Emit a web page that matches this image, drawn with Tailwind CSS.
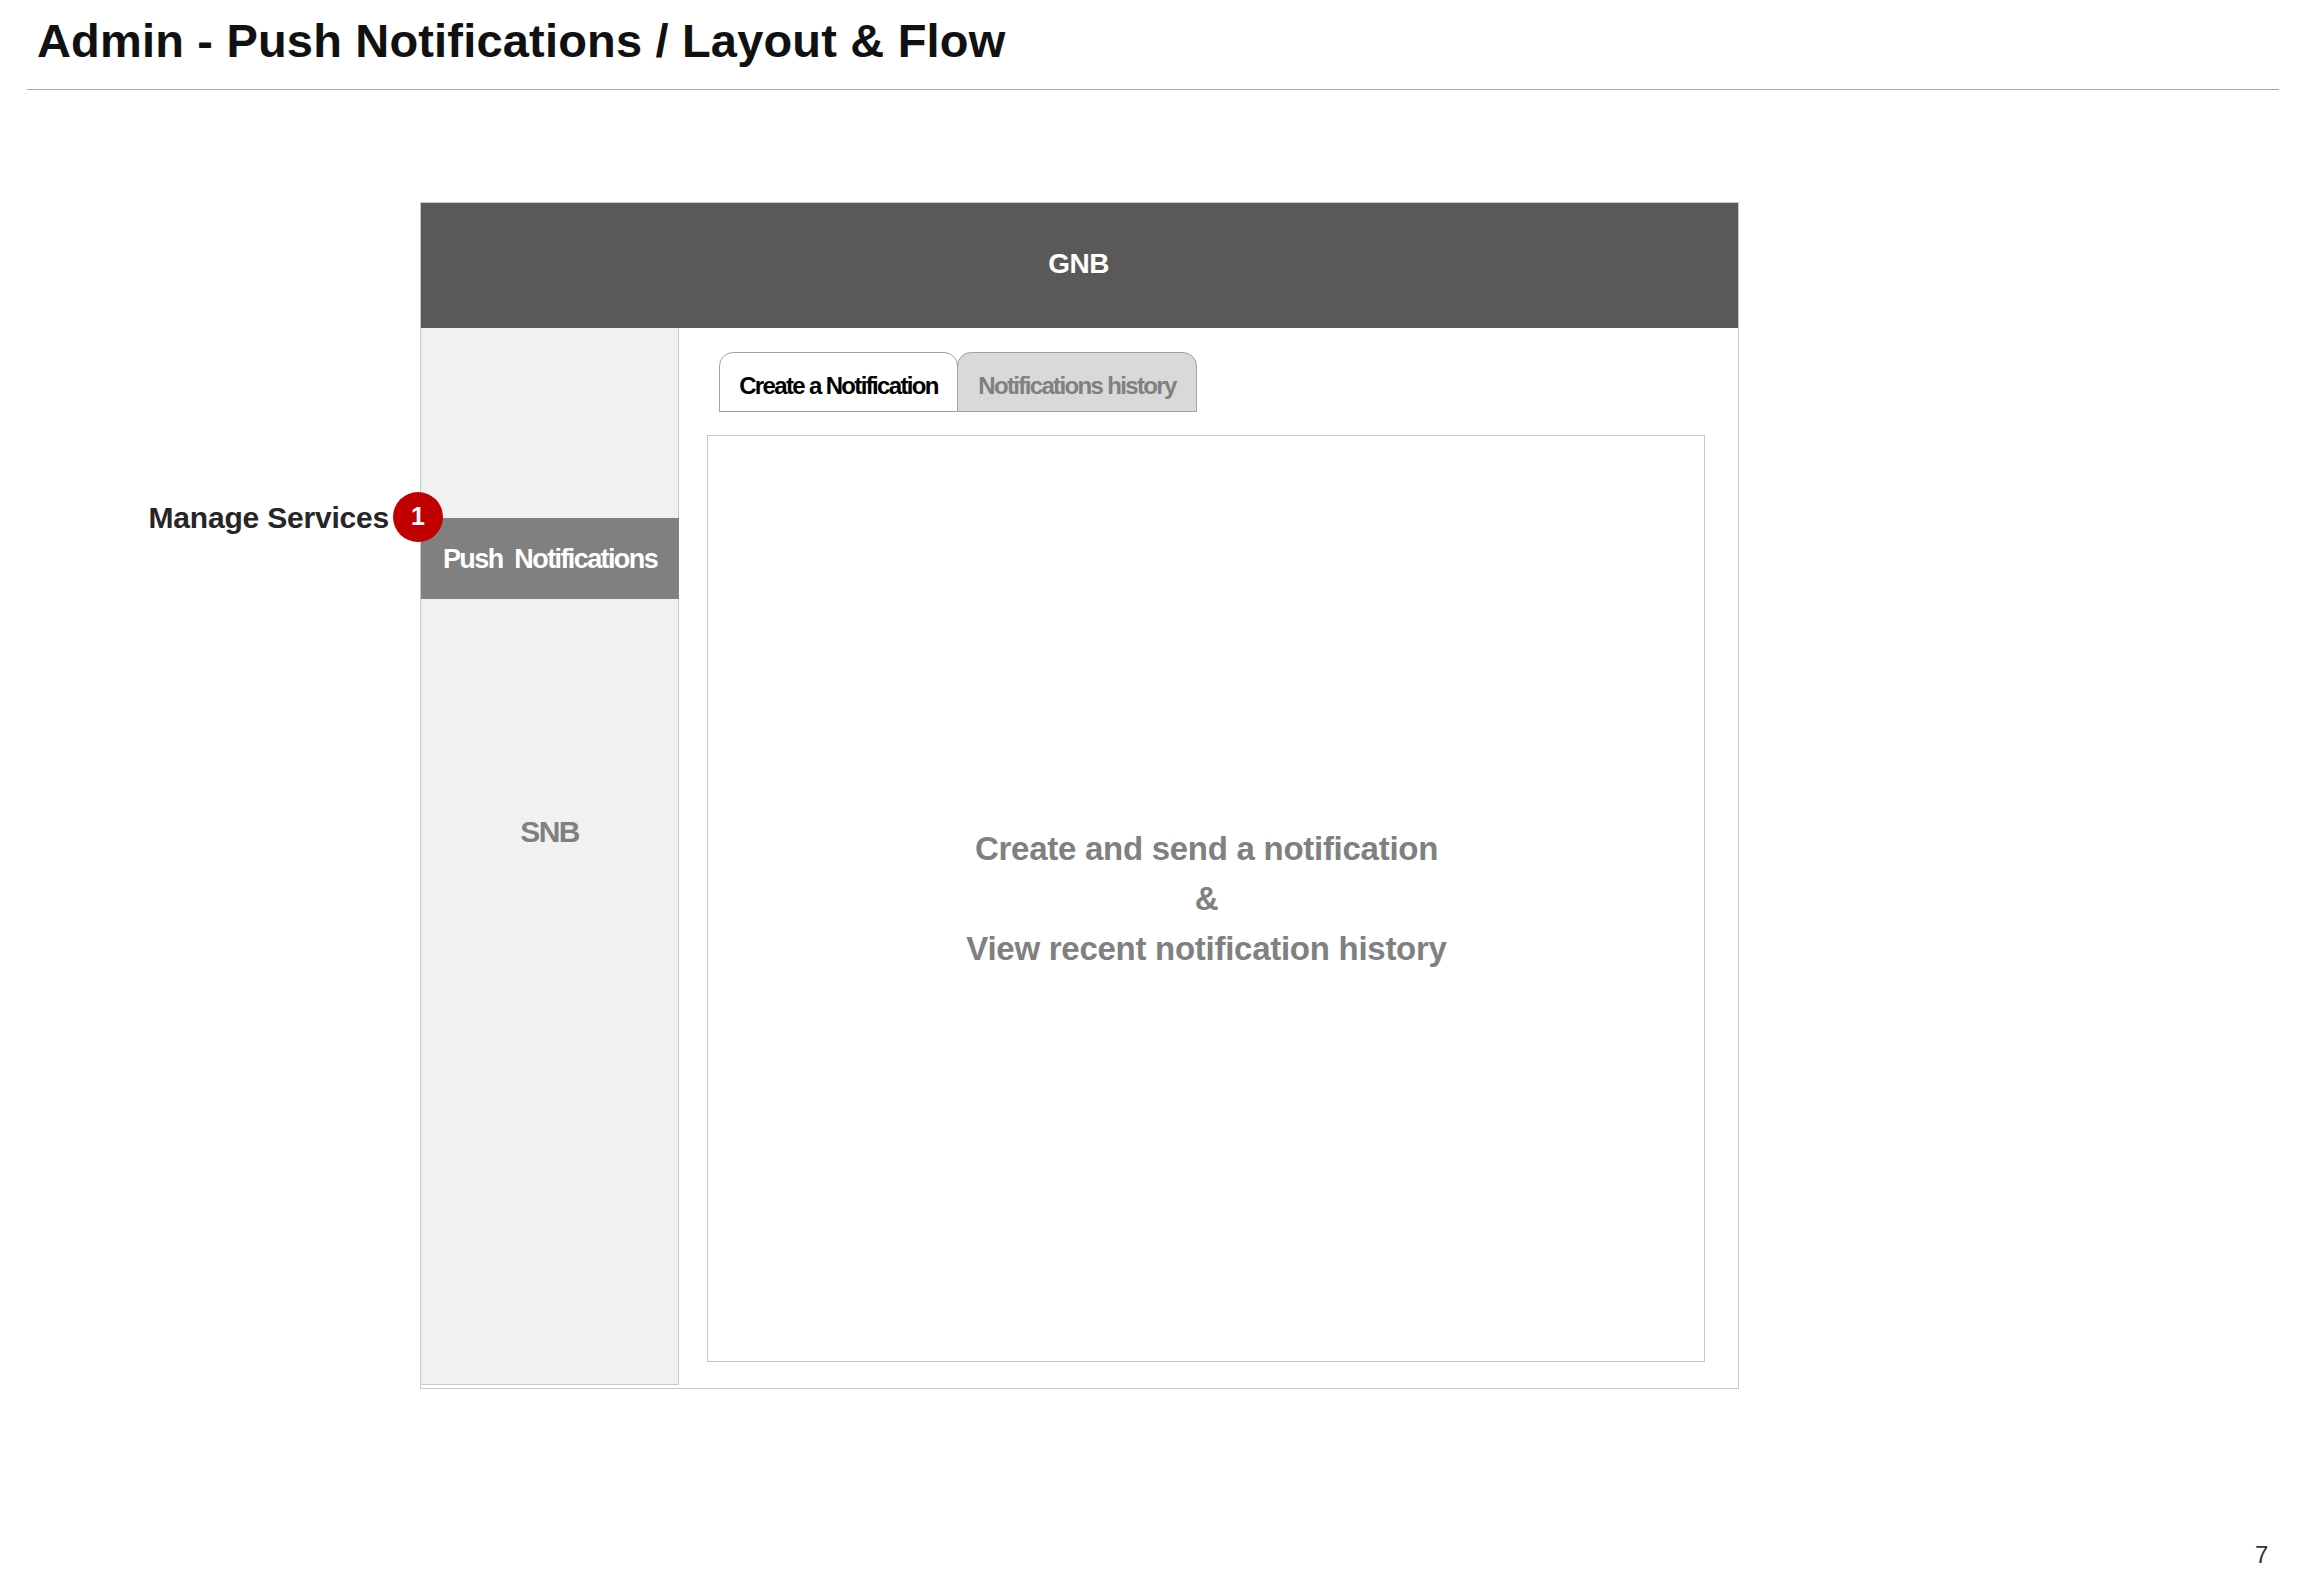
<!DOCTYPE html>
<html lang="en">
<head>
<meta charset="utf-8">
<title>Admin - Push Notifications / Layout &amp; Flow</title>
<script src="https://cdn.jsdelivr.net/npm/@tailwindcss/browser@4"></script>
</head>
<body class="bg-white">
<div class="relative w-[2308px] h-[1594px] overflow-hidden bg-white font-['Liberation_Sans',Arial,sans-serif]">
  <header class="ml-[27px] w-[2252px] h-[90px] border-b border-[#a6a6a6] pl-[10px]">
    <h1 class="pt-[13px] text-[47px] leading-[56px] font-bold tracking-[0.18px] text-[#111111]">Admin - Push Notifications / Layout &amp; Flow</h1>
  </header>

  <section class="ml-[420px] mt-[112px] w-[1319px] h-[1187px] border border-[#c8c8c8] flex flex-col">
    <div class="h-[125px] shrink-0 pb-[3px] pr-[2px] bg-[#595959] flex items-center justify-center text-[28px] font-bold tracking-[-0.5px] text-white">GNB</div>
    <div class="flex flex-1 min-h-0">
      <aside class="w-[258px] h-[1057px] shrink-0 bg-[#f1f1f1] border-r border-b border-[#c8c8c8] flex flex-col">
        <div class="relative mt-[190px] h-[81px] w-[258px] pt-[2px] bg-[#808080] flex items-center justify-center text-[27px] font-bold text-white">
          <span class="whitespace-pre tracking-[-1.6px]">Push  Notifications</span>
          <div class="absolute right-full top-[-26px] mr-[-22px] flex items-center gap-[4px]">
            <span class="pt-[2px] text-[30px] leading-[36px] font-bold tracking-[-0.2px] text-[#262626] whitespace-nowrap">Manage Services</span>
            <span class="w-[50px] h-[50px] rounded-full bg-[#c00000] flex items-center justify-center text-[25px] font-bold text-white">1</span>
          </div>
        </div>
        <div class="mt-[215px] text-center text-[30px] leading-[36px] font-bold tracking-[-1.6px] text-[#808080]">SNB</div>
      </aside>
      <main class="flex-1 pl-[28px] pt-[24px]">
        <div class="flex h-[60px] ml-[12px]">
          <div class="w-[239px] pt-[7px] border border-[#a0a0a0] rounded-t-[14px] bg-white flex items-center justify-center text-[24px] font-bold tracking-[-1.65px] text-black">Create a Notification</div>
          <div class="w-[240px] pt-[7px] -ml-px border border-[#a0a0a0] rounded-t-[14px] bg-[#d9d9d9] flex items-center justify-center text-[24px] font-bold tracking-[-1.65px] text-[#808080]">Notifications history</div>
        </div>
        <div class="mt-[23px] w-[998px] h-[927px] pl-[1px] border border-[#c8c8c8] flex flex-col items-center justify-center text-[33px] leading-[50px] font-bold tracking-[-0.27px] text-[#808080]">
          <p>Create and send a notification</p>
          <p>&amp;</p>
          <p>View recent notification history</p>
        </div>
      </main>
    </div>
  </section>

  <span class="absolute left-[2255px] top-[1541px] text-[24px] leading-[28px] text-[#333333]">7</span>
</div>
</body>
</html>
